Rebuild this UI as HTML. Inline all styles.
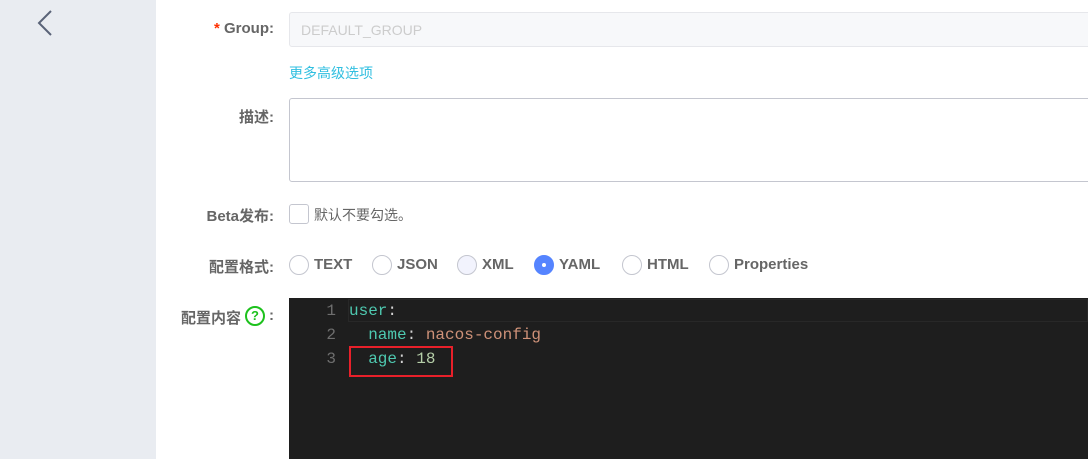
<!DOCTYPE html>
<html><head><meta charset="utf-8"><style>
*{box-sizing:border-box;margin:0;padding:0}
body{width:1088px;height:459px;overflow:hidden;background:#fff;font-family:"Liberation Sans","Noto Sans CJK SC",sans-serif;position:relative;color:#333}
.side{position:absolute;left:0;top:0;width:156px;height:459px;background:#e9ecf1}
.lbl{position:absolute;right:calc(1088px - 274px);font-size:15px;font-weight:bold;color:#666;text-align:right;white-space:nowrap}
.abs{position:absolute}
.radio{position:absolute;top:255px;width:20px;height:20px;border:1px solid #c4c6cf;border-radius:50%;background:#fff}
.rt{position:absolute;top:256px;font-size:15px;font-weight:bold;color:#666}
.code{font-family:"Liberation Mono","DejaVu Sans Mono",monospace;font-size:16px}
</style></head><body>
<div class="side"></div>
<svg class="abs" style="left:34px;top:10px" width="20" height="26"><path d="M17 1 L5 13 L17 25" fill="none" stroke="#5a6378" stroke-width="2"/></svg>
<div class="lbl" style="top:20px"><span style="color:#ff3000">*</span> Group:</div>
<div class="abs" style="left:289px;top:12px;width:810px;height:35px;background:#f7f8fa;border:1px solid #e6e7eb;border-radius:3px;color:#ccc;font-size:14px;padding:9px 11px">DEFAULT_GROUP</div>
<div class="abs" style="left:289px;top:63px;font-size:14px;color:#30bfe0">更多高级选项</div>
<div class="lbl" style="top:106px">描述:</div>
<div class="abs" style="left:289px;top:98px;width:810px;height:84px;border:1px solid #c4c6cf;border-radius:3px"></div>
<div class="lbl" style="top:205px">Beta发布:</div>
<div class="abs" style="left:289px;top:204px;width:20px;height:20px;border:1px solid #c4c6cf;border-radius:3px"></div>
<div class="abs" style="left:314px;top:205px;font-size:14px;color:#666">默认不要勾选。</div>
<div class="lbl" style="top:256px">配置格式:</div>
<div class="radio" style="left:289px"></div><div class="rt" style="left:314px">TEXT</div>
<div class="radio" style="left:372px"></div><div class="rt" style="left:397px">JSON</div>
<div class="radio" style="left:457px;background:#f2f3fd"></div><div class="rt" style="left:482px">XML</div>
<div class="radio" style="left:534px;background:#5584ff;border-color:#5584ff"><div style="position:absolute;left:7px;top:7px;width:4px;height:4px;border-radius:50%;background:#fff"></div></div><div class="rt" style="left:559px">YAML</div>
<div class="radio" style="left:622px"></div><div class="rt" style="left:647px">HTML</div>
<div class="radio" style="left:709px"></div><div class="rt" style="left:734px">Properties</div>
<div class="abs" style="left:181px;top:307px;font-size:15px;font-weight:bold;color:#666">配置内容</div>
<div class="abs" style="left:245px;top:306px;width:20px;height:20px;border:2px solid #1dc11d;border-radius:50%;color:#1dc11d;font-size:13px;font-weight:bold;text-align:center;line-height:16px">?</div>
<div class="abs" style="left:269px;top:307px;font-size:15px;font-weight:bold;color:#666">:</div>
<div class="abs" style="left:289px;top:298px;width:799px;height:161px;background:#1e1e1e"></div>
<div class="abs" style="left:348px;top:299px;width:740px;height:23px;border:1px solid #282828"></div>
<div class="abs code" style="left:320px;top:299px;color:#6e6e6e;line-height:24px;text-align:right;width:16px">1<br>2<br>3</div>
<div class="abs code" style="left:349px;top:299px;line-height:24px;white-space:pre;color:#d4d4d4"><span style="color:#4ec9b0">user</span>:
  <span style="color:#4ec9b0">name</span>: <span style="color:#ce9178">nacos-config</span>
  <span style="color:#4ec9b0">age</span>: <span style="color:#b5cea8">18</span></div>
<div class="abs" style="left:349px;top:346px;width:104px;height:31px;border:2px solid #e8202a"></div>
</body></html>
